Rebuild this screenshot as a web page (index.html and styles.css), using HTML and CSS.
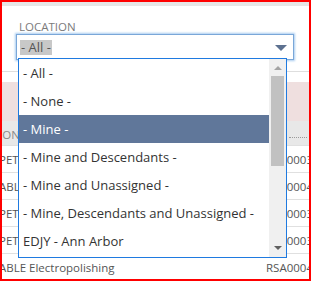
FILE: index.html
```html
<!DOCTYPE html>
<html lang="en">
<head>
  <meta charset="UTF-8" />
  <title>Location filter</title>
  <link rel="stylesheet" href="styles.css">
</head>
<body>
  <div class="frame">
    <div class="top-bar"></div>

    <div class="filter-panel">
      <label class="filter-label">LOCATION</label>
      <div class="select-box">
        <span class="select-value">- All -</span>
        <span class="select-arrow"></span>
      </div>
    </div>

    <div class="alert-band"></div>

    <div class="grid">
      <div class="grid-head">
        <span class="cell-left">ION</span>
        <span class="head-dots"></span>
      </div>
      <div class="grid-row"><span class="cell-left">PET</span><span class="cell-right">RSA0003</span></div>
      <div class="grid-row"><span class="cell-left">ABL</span><span class="cell-right">RSA0004</span></div>
      <div class="grid-row"><span class="cell-left">PET</span><span class="cell-right">RSA0003</span></div>
      <div class="grid-row"><span class="cell-left">PET</span><span class="cell-right">RSA0003</span></div>
      <div class="grid-row"><span class="cell-left">ABLE Electropolishing</span><span class="cell-right">RSA0004</span></div>
    </div>

    <!-- open dropdown of the select, lies over the grid -->
    <div class="dropdown">
      <ul class="options">
        <li>- All -</li>
        <li>- None -</li>
        <li class="selected">- Mine -</li>
        <li>- Mine and Descendants -</li>
        <li>- Mine and Unassigned -</li>
        <li>- Mine, Descendants and Unassigned -</li>
        <li>EDJY - Ann Arbor</li>
      </ul>
      <div class="scrollbar">
        <span class="arrow-up"></span>
        <span class="thumb"></span>
        <span class="arrow-down"></span>
      </div>
    </div>
  </div>
</body>
</html>
```

FILE: styles.css
```css
body {
  margin: 0;
  font-family: 'Open Sans', 'Noto Sans', sans-serif;
  background: #fff;
}

.frame {
  position: relative;
  width: 311px;
  height: 281px;
  box-sizing: border-box;
  border: 2px solid #ff0000;
  overflow: hidden;
  background: #fff;
}

.top-bar {
  height: 4px;
  background: #e6e6e6;
}

.filter-panel {
  padding: 14px 0 11px 14px;
  border-bottom: 1px solid #dedede;
}

.filter-label {
  display: block;
  font-size: 11.5px;
  line-height: 14px;
  color: #7b7b7b;
  margin-left: 3px;
}

.select-box {
  display: flex;
  align-items: center;
  justify-content: space-between;
  width: 267px;
  height: 24px;
  padding: 0 6px 0 3px;
  border: 1px solid #7aa7d8;
  box-shadow: 0 0 2px 1px #a9ccf0;
}

.select-value {
  font-size: 13px;
  line-height: 15px;
  color: #555;
  background: #c8c8c8;
  padding: 0 1px;
}

.select-arrow {
  width: 0;
  height: 0;
  border-left: 6px solid transparent;
  border-right: 6px solid transparent;
  border-top: 6px solid #5d7190;
  margin-top: 2px;
}

.alert-band {
  height: 39px;
  margin-top: 10px;
  background: #efdfdf;
}

.grid {
  font-size: 11.5px;
  color: #555;
}

.grid-head, .grid-row {
  display: flex;
  justify-content: space-between;
  align-items: center;
  border-bottom: 1px solid #e0e0e0;
}

.grid-head {
  height: 25px;
  padding-top: 2px;
  box-sizing: border-box;
  background: #e8e8e8;
  color: #8a8a8a;
}

.grid-row {
  height: 26px;
}

.cell-left {
  margin-left: -3px;
}

.cell-right {
  margin-right: -4px;
}

.head-dots {
  width: 18px;
  margin-right: 2px;
  margin-top: 6px;
  border-bottom: 1px dotted #9a9a9a;
}

.dropdown {
  position: absolute;
  left: 16px;
  top: 56px;
  width: 267px;
  height: 198px;
  display: flex;
  border: 1px solid #1f7ae0;
  background: #fff;
}

.options {
  flex: 1;
  list-style: none;
  margin: 0;
  padding: 0;
  font-size: 13px;
  color: #333;
}

.options li {
  height: 28px;
  line-height: 28px;
  padding-left: 4px;
  white-space: nowrap;
}

.options li.selected {
  background: #60779a;
  color: #fff;
}

.scrollbar {
  position: relative;
  width: 17px;
  background: #f0f0f0;
}

.arrow-up, .arrow-down {
  position: absolute;
  left: 5px;
  width: 0;
  height: 0;
  border-left: 4px solid transparent;
  border-right: 4px solid transparent;
}

.arrow-up {
  top: 7px;
  border-bottom: 4px solid #a3a3a3;
}

.arrow-down {
  bottom: 7px;
  border-top: 4px solid #606060;
}

.thumb {
  position: absolute;
  left: 2px;
  top: 17px;
  width: 13px;
  height: 90px;
  background: #c1c1c1;
}
```
